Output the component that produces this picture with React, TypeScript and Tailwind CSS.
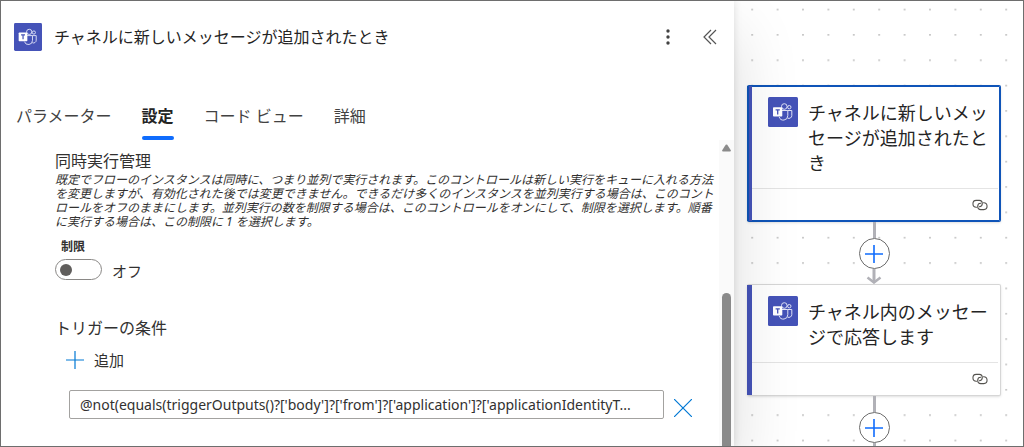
import { useState } from 'react';

interface FlowNode {
  id: string;
  title: string;
  selected: boolean;
}

const TABS = ['パラメーター', '設定', 'コード ビュー', '詳細'];

const NODES: FlowNode[] = [
  { id: 'trigger', title: 'チャネルに新しいメッセージが追加されたとき', selected: true },
  { id: 'reply', title: 'チャネル内のメッセージで応答します', selected: false },
];

function TeamsIcon({ className }: { className: string }) {
  return (
    <svg className={className} viewBox="0 0 30 30" fill="none" aria-hidden="true">
      <rect width="30" height="30" rx="1.5" fill="#4553b8" />
      <g stroke="#dfe2f6" strokeWidth="1">
        <circle cx="16.300" cy="9.500" r="2.800" />
        <circle cx="21.300" cy="10.200" r="1.700" />
        <path d="M14 13.500h5.800v5.200a4.400 4.400 0 0 1-8.600 1.300" />
        <path d="M19.800 13.500h4v5a2.900 2.900 0 0 1-4.200 2.600" />
      </g>
      <rect x="5" y="10.300" width="9.300" height="9.200" rx="0.800" fill="#fff" />
      <path d="M7.600 12.800h4.200M9.700 12.800v4.700" stroke="#4553b8" strokeWidth="1.300" />
    </svg>
  );
}

function LinkIcon() {
  return (
    <svg className="h-3 w-4" viewBox="0 0 16 12" fill="none" stroke="#55534f" strokeWidth="1.1" strokeLinecap="round" aria-hidden="true">
      <path d="M4.500 8.200A3.400 3.400 0 0 1 4.200 1.400h3a3.300 3.300 0 0 1 3.100 3.400C10.200 6.600 8.900 7.700 7.300 7.700" />
      <path d="M11.500 3.800a3.400 3.400 0 0 1 .3 6.800h-3a3.300 3.300 0 0 1-3.100-3.400C5.800 5.400 7.100 4.300 8.700 4.300" />
    </svg>
  );
}

function Plus({ className }: { className: string }) {
  return (
    <svg className={className} viewBox="0 0 18 18" fill="none" stroke="currentColor" aria-hidden="true">
      <path d="M9 0v18M0 9h18" />
    </svg>
  );
}

function NodeCard({ node }: { node: FlowNode }) {
  return (
    <div
      className={`flex w-full rounded-xs border-y border-r bg-white ${
        node.selected
          ? 'border-[#0f54b8] shadow-sm ring-1 ring-[#0f54b8] ring-inset'
          : 'border-[#d6d6d6] shadow-sm'
      }`}
    >
      <div className={`w-[5px] shrink-0 bg-[#4553b8] ${node.selected ? 'border-l-2 border-[#0f54b8]' : ''}`} />
      <div className="min-w-0 flex-1">
        <div className="flex gap-2.5 pt-[11px] pr-3 pb-3 pl-4">
          <TeamsIcon className="h-[30px] w-[30px] shrink-0" />
          <h3 className="mt-1 text-[18px] leading-[25px] text-[#242424]">{node.title}</h3>
        </div>
        <div className="mr-0.5 flex h-[33px] items-center justify-end border-t border-[#e4e4e4] pr-2.5">
          <LinkIcon />
        </div>
      </div>
    </div>
  );
}

function AddStepButton() {
  return (
    <button
      type="button"
      aria-label="ステップの追加"
      className="flex h-[31px] w-[31px] shrink-0 items-center justify-center rounded-full border border-[#6b6b6b] bg-white text-[#0f6cfd]"
    >
      <Plus className="h-[18px] w-[18px] stroke-[1.6]" />
    </button>
  );
}

function Canvas() {
  return (
    <main className="relative w-[289px] shrink-0 bg-white">
      {/* Dotted grid */}
      <svg className="absolute inset-0 h-full w-full" aria-hidden="true">
        <defs>
          <pattern id="dots" x="5.5" y="-4" width="25.4" height="25.35" patternUnits="userSpaceOnUse">
            <circle cx="12.7" cy="12.5" r="0.9" fill="#b0b0b0" />
          </pattern>
        </defs>
        <rect width="100%" height="100%" fill="url(#dots)" />
      </svg>

      <div className="relative flex h-full flex-col items-center pt-[84px] pr-[22px] pl-[13px]">
        <NodeCard node={NODES[0]} />
        <div className="h-4 w-[3px] shrink-0 bg-[#b1b1b7]" />
        <AddStepButton />
        <svg className="h-[15px] w-4 shrink-0" viewBox="0 0 16 15" fill="none" stroke="#b1b1b7" aria-hidden="true">
          <path d="M8 0v12" strokeWidth="3" />
          <path d="M1.500 8.500L8 13.500l6.500-5" strokeWidth="2.500" />
        </svg>
        <NodeCard node={NODES[1]} />
        <div className="h-4 w-[3px] shrink-0 bg-[#b1b1b7]" />
        <AddStepButton />
        <div className="w-[3px] flex-1 bg-[#b1b1b7]" />
      </div>
    </main>
  );
}

export default function App() {
  const [activeTab, setActiveTab] = useState('設定');
  const [limited, setLimited] = useState(false);
  const [condition, setCondition] = useState(
    "@not(equals(triggerOutputs()?['body']?['from']?['application']?['applicationIdentityT..."
  );

  return (
    <div className="flex min-h-screen overflow-hidden border border-[#6e6e6e] bg-white font-['Noto_Sans','Noto_Sans_CJK_JP',sans-serif] text-[#323130]">
      <section className="relative z-10 flex min-w-0 flex-1 flex-col bg-white shadow-[0_0_8px_rgba(0,0,0,0.12),0_32px_64px_rgba(0,0,0,0.14)]">
        {/* Header */}
        <header className="flex items-center pt-5 pr-2 pl-[13px]">
          <TeamsIcon className="h-7 w-7 shrink-0" />
          <h1 className="ml-3 flex-1 text-base leading-8 text-[#242424]">チャネルに新しいメッセージが追加されたとき</h1>
          <button type="button" aria-label="その他" className="flex h-8 w-8 items-center justify-center">
            <svg className="h-4 w-4" viewBox="0 0 16 16" fill="#424242" aria-hidden="true">
              <circle cx="8" cy="2" r="1.700" />
              <circle cx="8" cy="8" r="1.700" />
              <circle cx="8" cy="14" r="1.700" />
            </svg>
          </button>
          <button type="button" aria-label="折りたたむ" className="ml-2.5 flex h-8 w-8 items-center justify-center">
            <svg className="h-4 w-4" viewBox="0 0 16 16" fill="none" stroke="#555" strokeWidth="1.200" aria-hidden="true">
              <path d="M9 1L2 8l7 7M14 1L7 8l7 7" />
            </svg>
          </button>
        </header>

        {/* Tabs */}
        <div role="tablist" className="flex gap-[30px] pt-[51px] pl-[15px]">
          {TABS.map((tab) => (
            <button
              key={tab}
              type="button"
              role="tab"
              aria-selected={tab === activeTab}
              onClick={() => setActiveTab(tab)}
              className={`flex flex-col gap-2 text-base leading-6 whitespace-nowrap ${
                tab === activeTab ? 'font-bold text-[#242424]' : 'text-[#424242]'
              }`}
            >
              {tab}
              <span className={`h-1 w-full rounded-full ${tab === activeTab ? 'bg-[#0f6cfd]' : ''}`} />
            </button>
          ))}
        </div>

        <div className="flex flex-1">
          <div className="min-w-0 flex-1 pt-[9px] pb-6 pl-[54px]">
            <h2 className="text-base leading-6">同時実行管理</h2>
            <p className="text-xs leading-[14px] italic">
              既定でフローのインスタンスは同時に、つまり並列で実行されます。このコントロールは新しい実行をキューに入れる方法を変更しますが、有効化された後では変更できません。できるだけ多くのインスタンスを並列実行する場合は、このコントロールをオフのままにします。並列実行の数を制限する場合は、このコントロールをオンにして、制限を選択します。順番に実行する場合は、この制限に 1 を選択します。
            </p>
            <label htmlFor="limit" className="mt-2 block pl-1.5 text-xs leading-5 font-bold">
              制限
            </label>
            <div className="mt-0.5 flex items-start gap-2.5">
              <input
                id="limit"
                type="checkbox"
                role="switch"
                checked={limited}
                onChange={(e) => setLimited(e.target.checked)}
                className="flex h-[21px] w-[47px] appearance-none items-center rounded-full border border-[#8a8886] bg-white px-1 before:h-3 before:w-3 before:rounded-full before:bg-[#605e5c] checked:justify-end"
              />
              <span className="text-[15px] leading-6">{limited ? 'オン' : 'オフ'}</span>
            </div>

            <h2 className="mt-[33px] text-base leading-6">トリガーの条件</h2>
            <button type="button" className="mt-2 ml-[11px] flex items-center gap-2.5 text-[15px] leading-6">
              <Plus className="h-[18px] w-[18px] stroke-[1.200] text-[#0078d4]" />
              追加
            </button>
            <div className="mt-[17px] flex items-center pr-[25px] pl-3.5">
              <input
                type="text"
                aria-label="トリガーの条件"
                value={condition}
                onChange={(e) => setCondition(e.target.value)}
                className="h-[29px] min-w-0 flex-1 rounded-xs border border-[#a3a2a0] bg-white px-2.5 text-sm text-ellipsis"
              />
              <button type="button" aria-label="削除" onClick={() => setCondition('')} className="mt-2 ml-2 p-0.5">
                <svg className="h-[18px] w-[18px]" viewBox="0 0 18 18" fill="none" stroke="#0078d4" strokeWidth="1.200" aria-hidden="true">
                  <path d="M0 0l18 18M18 0L0 18" />
                </svg>
              </button>
            </div>
          </div>

          {/* Scrollbar */}
          <div className="flex w-[15px] shrink-0 flex-col items-center bg-[#fafafa] pt-1" aria-hidden="true">
            <svg className="h-2 w-[9px] shrink-0" viewBox="0 0 9 8" fill="#8a8a8a">
              <path d="M3.700.800Q4.500 0 5.300.800L8.800 6.200Q9 7.500 8 7.500H1Q0 7.500.200 6.200z" />
            </svg>
            <div className="mt-[141px] w-[9px] flex-1 rounded-t-full bg-[#8a8a8a]" />
          </div>
        </div>
      </section>

      <Canvas />
    </div>
  );
}
